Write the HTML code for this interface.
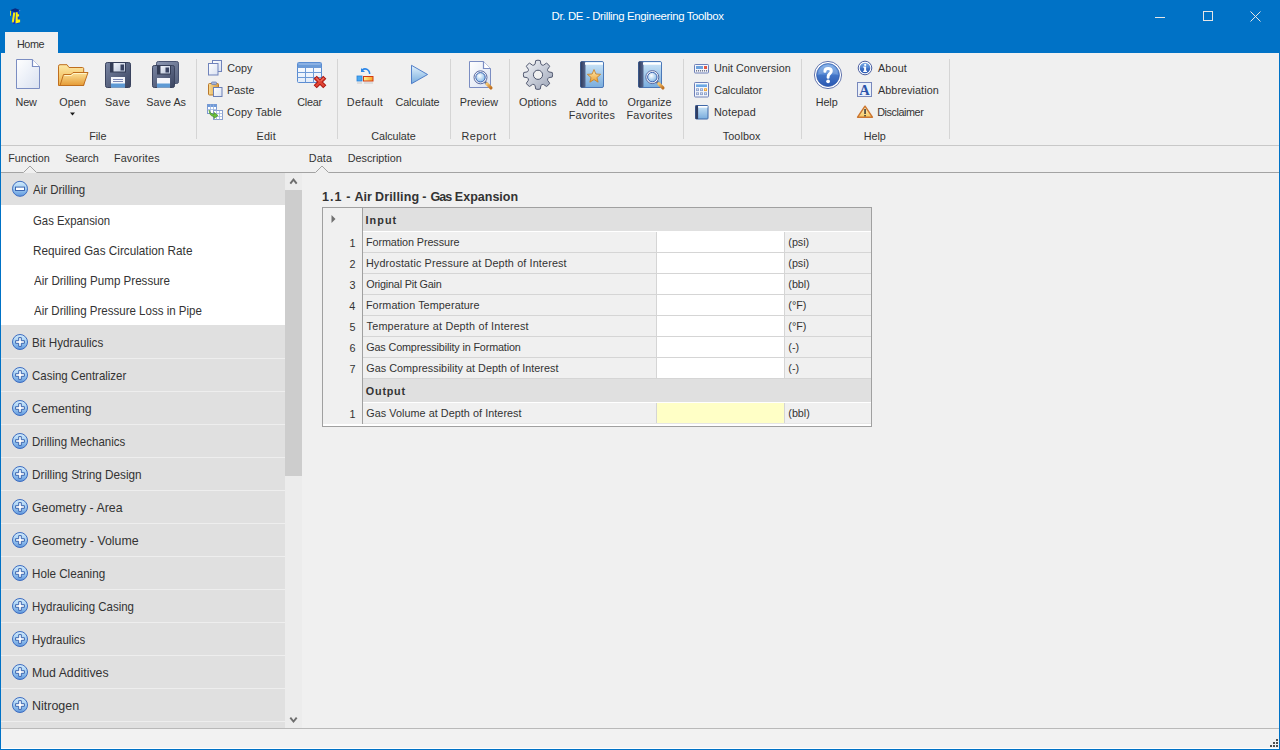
<!DOCTYPE html><html><head><meta charset="utf-8"><style>
html,body{margin:0;padding:0;width:1280px;height:750px;overflow:hidden;background:#f0f0f0}
.t{position:absolute;white-space:nowrap;font-family:"Liberation Sans",sans-serif}
.r{position:absolute}
svg{position:absolute}
</style></head><body>
<div class="r" style="left:0px;top:0px;width:1280px;height:750px;background:#0072c6;"></div>
<div class="t" style="left:551.59px;top:10.85px;font-size:11.4px;line-height:11.4px;color:#ffffff;letter-spacing:-0.341px;">Dr. DE - Drilling Engineering Toolbox</div>
<div class="r" style="left:1px;top:53px;width:1278px;height:92px;background:#f0f0f0;"></div>
<div class="r" style="left:1px;top:145px;width:1278px;height:1px;background:#c8c8c8;"></div>
<div class="r" style="left:5px;top:32px;width:53px;height:21px;background:#f0f0f0;"></div>
<div class="t" style="left:16.94px;top:38.86px;font-size:10.8px;line-height:10.8px;color:#333333;letter-spacing:-0.411px;">Home</div>
<div class="r" style="left:1px;top:146px;width:1278px;height:582px;background:#f0f0f0;"></div>
<div class="r" style="left:1px;top:728px;width:1278px;height:1px;background:#b9b9b9;"></div>
<div class="r" style="left:1px;top:729px;width:1278px;height:19px;background:#f2f2f2;"></div>
<div class="r" style="left:1px;top:748px;width:1278px;height:1px;background:#ffffff;"></div>
<div class="t" style="left:15.39px;top:96.86px;font-size:10.8px;line-height:10.8px;color:#333333;letter-spacing:-0.043px;">New</div>
<div class="t" style="left:59.21px;top:96.86px;font-size:10.8px;line-height:10.8px;color:#333333;letter-spacing:0.112px;">Open</div>
<div class="t" style="left:105.06px;top:96.86px;font-size:10.8px;line-height:10.8px;color:#333333;letter-spacing:0.085px;">Save</div>
<div class="t" style="left:146.36px;top:96.86px;font-size:10.8px;line-height:10.8px;color:#333333;letter-spacing:0.006px;">Save As</div>
<div class="t" style="left:89.14px;top:130.86px;font-size:10.8px;line-height:10.8px;color:#333333;letter-spacing:-0.031px;">File</div>
<div class="r" style="left:196px;top:59px;width:1px;height:80px;background:#d5d5d5;"></div>
<div class="r" style="left:337px;top:59px;width:1px;height:80px;background:#d5d5d5;"></div>
<div class="r" style="left:450px;top:59px;width:1px;height:80px;background:#d5d5d5;"></div>
<div class="r" style="left:509px;top:59px;width:1px;height:80px;background:#d5d5d5;"></div>
<div class="r" style="left:683px;top:59px;width:1px;height:80px;background:#d5d5d5;"></div>
<div class="r" style="left:801px;top:59px;width:1px;height:80px;background:#d5d5d5;"></div>
<div class="r" style="left:949px;top:59px;width:1px;height:80px;background:#d5d5d5;"></div>
<div class="t" style="left:227.21px;top:62.86px;font-size:10.8px;line-height:10.8px;color:#333333;letter-spacing:-0.041px;">Copy</div>
<div class="t" style="left:226.89px;top:84.86px;font-size:10.8px;line-height:10.8px;color:#333333;letter-spacing:0.002px;">Paste</div>
<div class="t" style="left:226.96px;top:106.86px;font-size:10.8px;line-height:10.8px;color:#333333;letter-spacing:0.104px;">Copy Table</div>
<div class="t" style="left:297.21px;top:96.86px;font-size:10.8px;line-height:10.8px;color:#333333;letter-spacing:-0.227px;">Clear</div>
<div class="t" style="left:256.54px;top:130.86px;font-size:10.8px;line-height:10.8px;color:#333333;letter-spacing:0.163px;">Edit</div>
<div class="t" style="left:346.84px;top:96.86px;font-size:10.8px;line-height:10.8px;color:#333333;letter-spacing:0.306px;">Default</div>
<div class="t" style="left:395.46px;top:96.86px;font-size:10.8px;line-height:10.8px;color:#333333;letter-spacing:-0.107px;">Calculate</div>
<div class="t" style="left:371.26px;top:130.86px;font-size:10.8px;line-height:10.8px;color:#333333;letter-spacing:-0.070px;">Calculate</div>
<div class="t" style="left:459.74px;top:96.86px;font-size:10.8px;line-height:10.8px;color:#333333;letter-spacing:-0.014px;">Preview</div>
<div class="t" style="left:461.44px;top:130.86px;font-size:10.8px;line-height:10.8px;color:#333333;letter-spacing:0.454px;">Report</div>
<div class="t" style="left:518.96px;top:96.86px;font-size:10.8px;line-height:10.8px;color:#333333;letter-spacing:0.069px;">Options</div>
<div class="t" style="left:576.00px;top:96.86px;font-size:10.8px;line-height:10.8px;color:#333333;letter-spacing:0.124px;">Add to</div>
<div class="t" style="left:568.64px;top:109.86px;font-size:10.8px;line-height:10.8px;color:#333333;letter-spacing:0.225px;">Favorites</div>
<div class="t" style="left:627.46px;top:96.86px;font-size:10.8px;line-height:10.8px;color:#333333;letter-spacing:0.033px;">Organize</div>
<div class="t" style="left:626.54px;top:109.86px;font-size:10.8px;line-height:10.8px;color:#333333;letter-spacing:0.175px;">Favorites</div>
<div class="t" style="left:713.89px;top:62.86px;font-size:10.8px;line-height:10.8px;color:#333333;letter-spacing:-0.002px;">Unit Conversion</div>
<div class="t" style="left:714.21px;top:84.86px;font-size:10.8px;line-height:10.8px;color:#333333;letter-spacing:-0.089px;">Calculator</div>
<div class="t" style="left:713.89px;top:106.86px;font-size:10.8px;line-height:10.8px;color:#333333;letter-spacing:0.156px;">Notepad</div>
<div class="t" style="left:722.78px;top:130.86px;font-size:10.8px;line-height:10.8px;color:#333333;letter-spacing:0.079px;">Toolbox</div>
<div class="t" style="left:815.64px;top:96.86px;font-size:10.8px;line-height:10.8px;color:#333333;letter-spacing:-0.031px;">Help</div>
<div class="t" style="left:878.00px;top:62.86px;font-size:10.8px;line-height:10.8px;color:#333333;letter-spacing:0.153px;">About</div>
<div class="t" style="left:878.00px;top:84.86px;font-size:10.8px;line-height:10.8px;color:#333333;letter-spacing:0.064px;">Abbreviation</div>
<div class="t" style="left:877.14px;top:106.86px;font-size:10.8px;line-height:10.8px;color:#333333;letter-spacing:-0.417px;">Disclaimer</div>
<div class="t" style="left:863.64px;top:130.86px;font-size:10.8px;line-height:10.8px;color:#333333;letter-spacing:-0.015px;">Help</div>
<div class="t" style="left:8.14px;top:152.86px;font-size:10.8px;line-height:10.8px;color:#333333;letter-spacing:0.021px;">Function</div>
<div class="t" style="left:65.26px;top:152.86px;font-size:10.8px;line-height:10.8px;color:#333333;letter-spacing:-0.128px;">Search</div>
<div class="t" style="left:113.94px;top:152.86px;font-size:10.8px;line-height:10.8px;color:#333333;letter-spacing:0.150px;">Favorites</div>
<div class="t" style="left:308.74px;top:152.86px;font-size:10.8px;line-height:10.8px;color:#333333;letter-spacing:0.159px;">Data</div>
<div class="t" style="left:347.84px;top:152.86px;font-size:10.8px;line-height:10.8px;color:#333333;letter-spacing:-0.019px;">Description</div>
<svg style="left:0;top:160px" width="1280" height="16"><path d="M1 12.5 H23.5 L30 6 L36.5 12.5 H315.5 L322 6 L328.5 12.5 H1279" fill="none" stroke="#a3a3a3" stroke-width="1"/></svg>
<div class="r" style="left:1px;top:173px;width:284px;height:555px;background:#e0e0e0;"></div>
<div class="r" style="left:1px;top:205px;width:284px;height:120px;background:#ffffff;"></div>
<div class="t" style="left:32.50px;top:183.50px;font-size:12.4px;line-height:12.4px;color:#333333;transform:scaleX(0.9250);transform-origin:0 0;">Air Drilling</div>
<div class="t" style="left:32.93px;top:214.50px;font-size:12.4px;line-height:12.4px;color:#333333;transform:scaleX(0.9165);transform-origin:0 0;">Gas Expansion</div>
<div class="t" style="left:32.56px;top:244.50px;font-size:12.4px;line-height:12.4px;color:#333333;transform:scaleX(0.9487);transform-origin:0 0;">Required Gas Circulation Rate</div>
<div class="t" style="left:33.50px;top:274.50px;font-size:12.4px;line-height:12.4px;color:#333333;transform:scaleX(0.9356);transform-origin:0 0;">Air Drilling Pump Pressure</div>
<div class="t" style="left:33.50px;top:304.50px;font-size:12.4px;line-height:12.4px;color:#333333;transform:scaleX(0.9309);transform-origin:0 0;">Air Drilling Pressure Loss in Pipe</div>
<div class="r" style="left:1px;top:358px;width:284px;height:1px;background:#eeeeee;"></div>
<div class="t" style="left:32.37px;top:337.00px;font-size:12.4px;line-height:12.4px;color:#333333;transform:scaleX(0.9405);transform-origin:0 0;">Bit Hydraulics</div>
<div class="r" style="left:1px;top:391px;width:284px;height:1px;background:#eeeeee;"></div>
<div class="t" style="left:31.83px;top:370.00px;font-size:12.4px;line-height:12.4px;color:#333333;transform:scaleX(0.9250);transform-origin:0 0;">Casing Centralizer</div>
<div class="r" style="left:1px;top:424px;width:284px;height:1px;background:#eeeeee;"></div>
<div class="t" style="left:31.78px;top:403.00px;font-size:12.4px;line-height:12.4px;color:#333333;transform:scaleX(0.9944);transform-origin:0 0;">Cementing</div>
<div class="r" style="left:1px;top:457px;width:284px;height:1px;background:#eeeeee;"></div>
<div class="t" style="left:32.38px;top:436.00px;font-size:12.4px;line-height:12.4px;color:#333333;transform:scaleX(0.9271);transform-origin:0 0;">Drilling Mechanics</div>
<div class="r" style="left:1px;top:490px;width:284px;height:1px;background:#eeeeee;"></div>
<div class="t" style="left:32.36px;top:469.00px;font-size:12.4px;line-height:12.4px;color:#333333;transform:scaleX(0.9475);transform-origin:0 0;">Drilling String Design</div>
<div class="r" style="left:1px;top:523px;width:284px;height:1px;background:#eeeeee;"></div>
<div class="t" style="left:31.78px;top:502.00px;font-size:12.4px;line-height:12.4px;color:#333333;transform:scaleX(0.9956);transform-origin:0 0;">Geometry - Area</div>
<div class="r" style="left:1px;top:556px;width:284px;height:1px;background:#eeeeee;"></div>
<div class="t" style="left:31.78px;top:535.00px;font-size:12.4px;line-height:12.4px;color:#333333;transform:scaleX(0.9995);transform-origin:0 0;">Geometry - Volume</div>
<div class="r" style="left:1px;top:589px;width:284px;height:1px;background:#eeeeee;"></div>
<div class="t" style="left:32.37px;top:568.00px;font-size:12.4px;line-height:12.4px;color:#333333;transform:scaleX(0.9400);transform-origin:0 0;">Hole Cleaning</div>
<div class="r" style="left:1px;top:622px;width:284px;height:1px;background:#eeeeee;"></div>
<div class="t" style="left:32.38px;top:601.00px;font-size:12.4px;line-height:12.4px;color:#333333;transform:scaleX(0.9251);transform-origin:0 0;">Hydraulicing Casing</div>
<div class="r" style="left:1px;top:655px;width:284px;height:1px;background:#eeeeee;"></div>
<div class="t" style="left:32.39px;top:634.00px;font-size:12.4px;line-height:12.4px;color:#333333;transform:scaleX(0.9211);transform-origin:0 0;">Hydraulics</div>
<div class="r" style="left:1px;top:688px;width:284px;height:1px;background:#eeeeee;"></div>
<div class="t" style="left:32.32px;top:667.00px;font-size:12.4px;line-height:12.4px;color:#333333;transform:scaleX(0.9922);transform-origin:0 0;">Mud Additives</div>
<div class="r" style="left:1px;top:721px;width:284px;height:1px;background:#eeeeee;"></div>
<div class="t" style="left:32.30px;top:700.00px;font-size:12.4px;line-height:12.4px;color:#333333;transform:scaleX(1.0057);transform-origin:0 0;">Nitrogen</div>
<div class="r" style="left:1px;top:722px;width:284px;height:6px;background:#e0e0e0;"></div>
<div class="r" style="left:285px;top:173px;width:17px;height:555px;background:#ececec;"></div>
<div class="r" style="left:285px;top:190px;width:17px;height:286px;background:#cdcdcd;"></div>
<div class="t" style="left:321.95px;top:191.42px;font-size:12.5px;line-height:12.5px;color:#333333;font-weight:bold;letter-spacing:1.025px;">1.1</div>
<div class="t" style="left:346.20px;top:191.42px;font-size:12.5px;line-height:12.5px;color:#333333;font-weight:bold;">-</div>
<div class="t" style="left:354.62px;top:191.42px;font-size:12.5px;line-height:12.5px;color:#333333;font-weight:bold;letter-spacing:-0.025px;">Air</div>
<div class="t" style="left:375.12px;top:191.42px;font-size:12.5px;line-height:12.5px;color:#333333;font-weight:bold;letter-spacing:0.132px;">Drilling</div>
<div class="t" style="left:422.20px;top:191.42px;font-size:12.5px;line-height:12.5px;color:#333333;font-weight:bold;">-</div>
<div class="t" style="left:430.50px;top:191.42px;font-size:12.5px;line-height:12.5px;color:#333333;font-weight:bold;letter-spacing:-0.963px;">Gas</div>
<div class="t" style="left:454.82px;top:191.42px;font-size:12.5px;line-height:12.5px;color:#333333;font-weight:bold;letter-spacing:0.012px;">Expansion</div>
<div class="r" style="left:322px;top:207px;width:550px;height:220px;background:#a0a0a0;"></div>
<div class="r" style="left:323px;top:208px;width:548px;height:218px;background:#ffffff;"></div>
<div class="r" style="left:323px;top:208px;width:39px;height:216px;background:#f0f0f0;"></div>
<div class="r" style="left:362px;top:208px;width:1px;height:216px;background:#a0a0a0;"></div>
<div class="r" style="left:363px;top:208px;width:508px;height:23px;background:#e0e0e0;"></div>
<div class="r" style="left:363px;top:231px;width:508px;height:1px;background:#ffffff;"></div>
<div class="t" style="left:365.54px;top:214.86px;font-size:10.8px;line-height:10.8px;color:#333333;font-weight:bold;letter-spacing:1.053px;">Input</div>
<div class="r" style="left:363px;top:232px;width:293px;height:20px;background:#f0f0f0;"></div>
<div class="r" style="left:656px;top:232px;width:1px;height:20px;background:#d5d5d5;"></div>
<div class="r" style="left:657px;top:232px;width:127px;height:20px;background:#ffffff;"></div>
<div class="r" style="left:784px;top:232px;width:1px;height:20px;background:#d5d5d5;"></div>
<div class="r" style="left:785px;top:232px;width:86px;height:20px;background:#f0f0f0;"></div>
<div class="r" style="left:363px;top:252px;width:508px;height:1px;background:#d5d5d5;"></div>
<div class="t" style="left:349.49px;top:237.86px;font-size:10.8px;line-height:10.8px;color:#333333;">1</div>
<div class="t" style="left:365.94px;top:236.86px;font-size:10.8px;line-height:10.8px;color:#333333;letter-spacing:-0.078px;">Formation Pressure</div>
<div class="t" style="left:788.35px;top:236.86px;font-size:10.8px;line-height:10.8px;color:#333333;letter-spacing:-0.050px;">(psi)</div>
<div class="r" style="left:363px;top:253px;width:293px;height:20px;background:#f0f0f0;"></div>
<div class="r" style="left:656px;top:253px;width:1px;height:20px;background:#d5d5d5;"></div>
<div class="r" style="left:657px;top:253px;width:127px;height:20px;background:#ffffff;"></div>
<div class="r" style="left:784px;top:253px;width:1px;height:20px;background:#d5d5d5;"></div>
<div class="r" style="left:785px;top:253px;width:86px;height:20px;background:#f0f0f0;"></div>
<div class="r" style="left:363px;top:273px;width:508px;height:1px;background:#d5d5d5;"></div>
<div class="t" style="left:349.49px;top:258.86px;font-size:10.8px;line-height:10.8px;color:#333333;">2</div>
<div class="t" style="left:365.94px;top:257.86px;font-size:10.8px;line-height:10.8px;color:#333333;letter-spacing:0.140px;">Hydrostatic Pressure at Depth of Interest</div>
<div class="t" style="left:788.35px;top:257.86px;font-size:10.8px;line-height:10.8px;color:#333333;letter-spacing:-0.050px;">(psi)</div>
<div class="r" style="left:363px;top:274px;width:293px;height:20px;background:#f0f0f0;"></div>
<div class="r" style="left:656px;top:274px;width:1px;height:20px;background:#d5d5d5;"></div>
<div class="r" style="left:657px;top:274px;width:127px;height:20px;background:#ffffff;"></div>
<div class="r" style="left:784px;top:274px;width:1px;height:20px;background:#d5d5d5;"></div>
<div class="r" style="left:785px;top:274px;width:86px;height:20px;background:#f0f0f0;"></div>
<div class="r" style="left:363px;top:294px;width:508px;height:1px;background:#d5d5d5;"></div>
<div class="t" style="left:349.49px;top:279.86px;font-size:10.8px;line-height:10.8px;color:#333333;">3</div>
<div class="t" style="left:366.26px;top:278.86px;font-size:10.8px;line-height:10.8px;color:#333333;letter-spacing:-0.196px;">Original Pit Gain</div>
<div class="t" style="left:788.35px;top:278.86px;font-size:10.8px;line-height:10.8px;color:#333333;letter-spacing:-0.050px;">(bbl)</div>
<div class="r" style="left:363px;top:295px;width:293px;height:20px;background:#f0f0f0;"></div>
<div class="r" style="left:656px;top:295px;width:1px;height:20px;background:#d5d5d5;"></div>
<div class="r" style="left:657px;top:295px;width:127px;height:20px;background:#ffffff;"></div>
<div class="r" style="left:784px;top:295px;width:1px;height:20px;background:#d5d5d5;"></div>
<div class="r" style="left:785px;top:295px;width:86px;height:20px;background:#f0f0f0;"></div>
<div class="r" style="left:363px;top:315px;width:508px;height:1px;background:#d5d5d5;"></div>
<div class="t" style="left:349.28px;top:300.86px;font-size:10.8px;line-height:10.8px;color:#333333;">4</div>
<div class="t" style="left:365.94px;top:299.86px;font-size:10.8px;line-height:10.8px;color:#333333;letter-spacing:0.080px;">Formation Temperature</div>
<div class="t" style="left:788.35px;top:299.86px;font-size:10.8px;line-height:10.8px;color:#333333;letter-spacing:-0.050px;">(°F)</div>
<div class="r" style="left:363px;top:316px;width:293px;height:20px;background:#f0f0f0;"></div>
<div class="r" style="left:656px;top:316px;width:1px;height:20px;background:#d5d5d5;"></div>
<div class="r" style="left:657px;top:316px;width:127px;height:20px;background:#ffffff;"></div>
<div class="r" style="left:784px;top:316px;width:1px;height:20px;background:#d5d5d5;"></div>
<div class="r" style="left:785px;top:316px;width:86px;height:20px;background:#f0f0f0;"></div>
<div class="r" style="left:363px;top:336px;width:508px;height:1px;background:#d5d5d5;"></div>
<div class="t" style="left:349.49px;top:321.86px;font-size:10.8px;line-height:10.8px;color:#333333;">5</div>
<div class="t" style="left:366.58px;top:320.86px;font-size:10.8px;line-height:10.8px;color:#333333;letter-spacing:0.213px;">Temperature at Depth of Interest</div>
<div class="t" style="left:788.35px;top:320.86px;font-size:10.8px;line-height:10.8px;color:#333333;letter-spacing:-0.050px;">(°F)</div>
<div class="r" style="left:363px;top:337px;width:293px;height:20px;background:#f0f0f0;"></div>
<div class="r" style="left:656px;top:337px;width:1px;height:20px;background:#d5d5d5;"></div>
<div class="r" style="left:657px;top:337px;width:127px;height:20px;background:#ffffff;"></div>
<div class="r" style="left:784px;top:337px;width:1px;height:20px;background:#d5d5d5;"></div>
<div class="r" style="left:785px;top:337px;width:86px;height:20px;background:#f0f0f0;"></div>
<div class="r" style="left:363px;top:357px;width:508px;height:1px;background:#d5d5d5;"></div>
<div class="t" style="left:349.49px;top:342.86px;font-size:10.8px;line-height:10.8px;color:#333333;">6</div>
<div class="t" style="left:366.26px;top:341.86px;font-size:10.8px;line-height:10.8px;color:#333333;letter-spacing:-0.142px;">Gas Compressibility in Formation</div>
<div class="t" style="left:788.35px;top:341.86px;font-size:10.8px;line-height:10.8px;color:#333333;letter-spacing:-0.050px;">(-)</div>
<div class="r" style="left:363px;top:358px;width:293px;height:20px;background:#f0f0f0;"></div>
<div class="r" style="left:656px;top:358px;width:1px;height:20px;background:#d5d5d5;"></div>
<div class="r" style="left:657px;top:358px;width:127px;height:20px;background:#ffffff;"></div>
<div class="r" style="left:784px;top:358px;width:1px;height:20px;background:#d5d5d5;"></div>
<div class="r" style="left:785px;top:358px;width:86px;height:20px;background:#f0f0f0;"></div>
<div class="r" style="left:363px;top:378px;width:508px;height:1px;background:#d5d5d5;"></div>
<div class="t" style="left:349.49px;top:363.86px;font-size:10.8px;line-height:10.8px;color:#333333;">7</div>
<div class="t" style="left:366.26px;top:362.86px;font-size:10.8px;line-height:10.8px;color:#333333;letter-spacing:0.036px;">Gas Compressibility at Depth of Interest</div>
<div class="t" style="left:788.35px;top:362.86px;font-size:10.8px;line-height:10.8px;color:#333333;letter-spacing:-0.050px;">(-)</div>
<div class="r" style="left:363px;top:379px;width:508px;height:23px;background:#e0e0e0;"></div>
<div class="r" style="left:363px;top:402px;width:508px;height:1px;background:#ffffff;"></div>
<div class="t" style="left:365.87px;top:385.86px;font-size:10.8px;line-height:10.8px;color:#333333;font-weight:bold;letter-spacing:0.765px;">Output</div>
<div class="r" style="left:363px;top:403px;width:293px;height:20px;background:#f0f0f0;"></div>
<div class="r" style="left:656px;top:403px;width:1px;height:20px;background:#d5d5d5;"></div>
<div class="r" style="left:657px;top:403px;width:127px;height:20px;background:#ffffc6;"></div>
<div class="r" style="left:784px;top:403px;width:1px;height:20px;background:#d5d5d5;"></div>
<div class="r" style="left:785px;top:403px;width:86px;height:20px;background:#f0f0f0;"></div>
<div class="r" style="left:363px;top:423px;width:508px;height:1px;background:#d5d5d5;"></div>
<div class="t" style="left:349.49px;top:408.86px;font-size:10.8px;line-height:10.8px;color:#333333;">1</div>
<div class="t" style="left:366.26px;top:407.86px;font-size:10.8px;line-height:10.8px;color:#333333;letter-spacing:0.055px;">Gas Volume at Depth of Interest</div>
<div class="t" style="left:788.35px;top:407.86px;font-size:10.8px;line-height:10.8px;color:#333333;letter-spacing:-0.050px;">(bbl)</div>
<div class="r" style="left:363px;top:423px;width:508px;height:1px;background:#e6e6e6;"></div>
<svg style="left:0;top:0" width="1280" height="750" viewBox="0 0 1280 750"><defs>
<linearGradient id="gPage" x1="0" y1="0" x2="1" y2="1"><stop offset="0" stop-color="#ffffff"/><stop offset="1" stop-color="#d9e1f1"/></linearGradient>
<linearGradient id="gFoldBack" x1="0" y1="0" x2="0" y2="1"><stop offset="0" stop-color="#fde9a6"/><stop offset="1" stop-color="#eeb048"/></linearGradient>
<linearGradient id="gFoldFront" x1="0" y1="0" x2="0" y2="1"><stop offset="0" stop-color="#fce39a"/><stop offset="1" stop-color="#e59a34"/></linearGradient>
<linearGradient id="gDisk" x1="0" y1="0" x2="1" y2="1"><stop offset="0" stop-color="#7a86a3"/><stop offset="1" stop-color="#3a4460"/></linearGradient>
<linearGradient id="gDisk2" x1="0" y1="0" x2="1" y2="1"><stop offset="0" stop-color="#8d98b3"/><stop offset="1" stop-color="#55607c"/></linearGradient>
<linearGradient id="gShut" x1="0" y1="0" x2="1" y2="1"><stop offset="0" stop-color="#f2f5fb"/><stop offset="1" stop-color="#b8c3d8"/></linearGradient>
<linearGradient id="gTri" x1="0" y1="0" x2="0" y2="1"><stop offset="0" stop-color="#e2f2fc"/><stop offset="1" stop-color="#76acde"/></linearGradient>
<linearGradient id="gGear" x1="0" y1="0" x2="1" y2="1"><stop offset="0" stop-color="#f6f7fa"/><stop offset="1" stop-color="#9aa3b6"/></linearGradient>
<linearGradient id="gBook" x1="0" y1="0" x2="0" y2="1"><stop offset="0" stop-color="#cfe7f8"/><stop offset="1" stop-color="#78acdd"/></linearGradient>
<linearGradient id="gSpine" x1="0" y1="0" x2="1" y2="0"><stop offset="0" stop-color="#2e3a5c"/><stop offset="1" stop-color="#56678e"/></linearGradient>
<linearGradient id="gStar" x1="0" y1="0" x2="0" y2="1"><stop offset="0" stop-color="#fff0b8"/><stop offset="1" stop-color="#eb9c2c"/></linearGradient>
<radialGradient id="gLens" cx="0.4" cy="0.35" r="0.7"><stop offset="0" stop-color="#ffffff"/><stop offset="1" stop-color="#7fb6e6"/></radialGradient>
<linearGradient id="gHandle" x1="0" y1="0" x2="1" y2="1"><stop offset="0" stop-color="#f8c870"/><stop offset="1" stop-color="#c07020"/></linearGradient>
<linearGradient id="gHelp" x1="0" y1="0" x2="0" y2="1"><stop offset="0" stop-color="#7aaae6"/><stop offset="0.5" stop-color="#4f82d0"/><stop offset="0.52" stop-color="#4274c6"/><stop offset="1" stop-color="#2a58b2"/></linearGradient>
<linearGradient id="gCirc" x1="0" y1="0" x2="0" y2="1"><stop offset="0" stop-color="#d2ebfb"/><stop offset="0.5" stop-color="#a2cdf2"/><stop offset="1" stop-color="#5e96dc"/></linearGradient>
<linearGradient id="gWarn" x1="0" y1="0" x2="0" y2="1"><stop offset="0" stop-color="#fff3c8"/><stop offset="1" stop-color="#f5c860"/></linearGradient>
<linearGradient id="gClip" x1="0" y1="0" x2="1" y2="0"><stop offset="0" stop-color="#f9dc94"/><stop offset="1" stop-color="#d99a40"/></linearGradient>
<linearGradient id="gDef" x1="0" y1="0" x2="1" y2="0"><stop offset="0" stop-color="#fff6a0"/><stop offset="1" stop-color="#f7a020"/></linearGradient>
<linearGradient id="gCell" x1="0" y1="0" x2="0" y2="1"><stop offset="0" stop-color="#ffffff"/><stop offset="1" stop-color="#e2ecf9"/></linearGradient>
</defs><path d="M11.5 11.5 L19 11 L19.5 23.5 L13 24 Z" fill="#0a30d8" opacity="0.9"/><path d="M10 10.3 L15.2 8.3 L20.5 10.2 L15.3 12.3 Z" fill="#0b2a80"/><path d="M18.5 10.6 L20.3 10.2 L20 11.2 Z" fill="#7fc0f0"/><path d="M10 10.8 h1 v5 h-1 Z" fill="#d8e020"/><path d="M13.2 12.6 h2.1 l-1.4 9.6 h-2.1 Z" fill="#f6f010"/><path d="M15.8 12.3 h1.9 v2 l1.4 -0.1 v2.2 h-1.4 v3.2 h2.4 v2.6 l-4.6 1.2 Z" fill="#fbf40c"/><path d="M12.3 21.6 h1.2 l-0.2 0.8 h-1.1 Z" fill="#e0a020"/><path d="M16.5 59.5 H32.5 L39.5 66.5 V88.5 H16.5 Z" fill="url(#gPage)" stroke="#7b8dc2" stroke-width="1"/><path d="M32.5 59.5 V66.5 H39.5" fill="#ffffff" stroke="#7b8dc2" stroke-width="1.2"/><path d="M58.5 85.5 V66.2 q0-1.5 1.5-1.5 H67 L69 67.5 H82.5 q1.2 0 1.2 1.2 V85.5 Z" fill="url(#gFoldBack)" stroke="#bf6e1e" stroke-width="1"/><path d="M60 85.5 L63.5 74.5 H71 L73 72.5 H88 L83.5 85.5 Z" fill="url(#gFoldFront)" stroke="#bf6e1e" stroke-width="1" stroke-linejoin="round"/><path d="M64.5 75.5 H71.5 L73.5 73.5 H86.5" fill="none" stroke="#fff4c8" stroke-width="1"/><rect x="105.5" y="62.5" width="25" height="25" rx="1.8" fill="url(#gDisk)" stroke="#3a435e" stroke-width="1"/><rect x="110" y="62.5" width="16" height="10" fill="#333c55"/><rect x="113.5" y="63" width="11.5" height="8.5" fill="url(#gShut)"/><rect x="120.5" y="64.5" width="3.5" height="6" fill="#384260"/><rect x="111" y="77" width="14" height="10.5" fill="#f4f6fb"/><rect x="111" y="83.5" width="14" height="4" fill="#5d9ad5"/><rect x="113" y="79" width="10" height="1" fill="#7c88b4"/><rect x="113" y="81" width="10" height="1" fill="#7c88b4"/><rect x="156.5" y="61.5" width="22" height="22" rx="1.8" fill="url(#gDisk2)" stroke="#4a5472" stroke-width="1"/><rect x="152.5" y="65.5" width="22" height="22" rx="1.8" fill="url(#gDisk)" stroke="#3a435e" stroke-width="1"/><rect x="157" y="65.5" width="14" height="9" fill="#333c55"/><rect x="160.5" y="66" width="9.5" height="7.5" fill="url(#gShut)"/><rect x="165.5" y="67.5" width="3.5" height="5" fill="#384260"/><rect x="157" y="78" width="13" height="9.5" fill="#f4f6fb"/><rect x="157" y="83.5" width="13" height="4" fill="#5d9ad5"/><rect x="212.5" y="60.5" width="9" height="11" fill="url(#gPage)" stroke="#7083bb"/><rect x="208.5" y="63.5" width="9.5" height="11.5" fill="url(#gPage)" stroke="#7083bb"/><rect x="208.5" y="83.5" width="10" height="11.5" rx="1" fill="url(#gClip)" stroke="#b9782c"/><rect x="211.5" y="82" width="5" height="2.5" rx="0.8" fill="#a8b6d8" stroke="#6b7fb5" stroke-width="0.8"/><rect x="213.5" y="87.5" width="8.5" height="9" fill="url(#gPage)" stroke="#6b7fb5"/><rect x="207.5" y="104.5" width="9" height="9" fill="#ffffff" stroke="#7d9ad0"/><rect x="207.5" y="104.5" width="9" height="2.5" fill="#6f9ad8"/><path d="M210.5 104.5 V113.5 M213.5 104.5 V113.5 M207.5 109.5 H216.5" stroke="#9ab4e0" stroke-width="0.8"/><rect x="213.5" y="110.5" width="9" height="9" fill="#ffffff" stroke="#8aa0d0"/><path d="M216.5 110.5 V119.5 M219.5 110.5 V119.5 M213.5 113.5 H222.5 M213.5 116.5 H222.5" stroke="#a0b4de" stroke-width="0.8"/><path d="M209 110 q1 4 5 4.5 v-2 l4 3 l-4 3 v-2 q-4.5 0-5-6.5 Z" fill="#6cc03c" stroke="#3d8a1c" stroke-width="0.6"/><rect x="297.5" y="62.5" width="24" height="20" rx="1" fill="url(#gCell)" stroke="#5a8cd2"/><rect x="298" y="63" width="23" height="4.5" fill="#6b9bd8"/><rect x="298.5" y="63.5" width="22" height="1" fill="#a9c6ee"/><path d="M297.5 67.5 H321.5 M297.5 72.5 H321.5 M297.5 77.5 H321.5 M305.5 67.5 V82.5 M313.5 67.5 V82.5" stroke="#6e9ad6" stroke-width="1"/><path d="M315.2 77.2 L324.8 86.8 M324.8 77.2 L315.2 86.8" stroke="#a8140f" stroke-width="4.4" stroke-linecap="butt"/><path d="M315.8 77.8 L324.2 86.2 M324.2 77.8 L315.8 86.2" stroke="#e04434" stroke-width="2.6" stroke-linecap="butt"/><path d="M316.3 78.0 L319.5 81.2 M323.7 78.0 L320.5 81.2" stroke="#f08a7a" stroke-width="0.9"/><rect x="357" y="76" width="5" height="5" fill="#4aa8f0" stroke="#2a80d8" stroke-width="0.8"/><rect x="363.5" y="76.5" width="9.5" height="4.5" fill="url(#gDef)" stroke="#d23a12" stroke-width="1"/><path d="M362 70 q3.5 -2.5 6.5 0.5 q1.2 1.5 1.2 3.5" fill="none" stroke="#2a86e8" stroke-width="1.5"/><path d="M361 68 V72 H365 Z" fill="#2a86e8"/><rect x="357" y="82.5" width="5" height="1" fill="#c8c8c8"/><rect x="364" y="82.5" width="9" height="1" fill="#c8c8c8"/><path d="M411.5 65.3 L427.6 74.5 L411.5 83.7 Z" fill="url(#gTri)" stroke="#4474c4" stroke-width="0.9" stroke-linejoin="miter"/><path d="M469.5 61.5 H483.5 L490.5 68.5 V87.5 H469.5 Z" fill="url(#gPage)" stroke="#7b8dc2"/><path d="M483.5 61.5 V68.5 H490.5" fill="#ffffff" stroke="#7b8dc2" stroke-width="1.2"/><path d="M484.42 81.30 L486.95 83.86" stroke="#56648e" stroke-width="2.6" stroke-linecap="butt"/><path d="M486.95 83.86 L490.94 87.93" stroke="url(#gHandle)" stroke-width="3.2" stroke-linecap="round"/><circle cx="480.5" cy="77.3" r="6.5" fill="#f4f6fb" stroke="#5a6aa0" stroke-width="1"/><circle cx="480.5" cy="77.3" r="4.7" fill="url(#gLens)" stroke="#3a62b0" stroke-width="1"/><path d="M535.07 64.20 L535.71 60.58 Q538.00 59.80 540.29 60.58 L540.93 64.20 Q541.87 65.47 543.42 65.23 L543.42 65.23 L546.43 63.13 Q548.61 64.19 549.67 66.37 L547.57 69.38 Q547.33 70.93 548.60 71.87 L548.60 71.87 L552.22 72.51 Q553.00 74.80 552.22 77.09 L548.60 77.73 Q547.33 78.67 547.57 80.22 L547.57 80.22 L549.67 83.23 Q548.61 85.41 546.43 86.47 L543.42 84.37 Q541.87 84.13 540.93 85.40 L540.93 85.40 L540.29 89.02 Q538.00 89.80 535.71 89.02 L535.07 85.40 Q534.13 84.13 532.58 84.37 L532.58 84.37 L529.57 86.47 Q527.39 85.41 526.33 83.23 L528.43 80.22 Q528.67 78.67 527.40 77.73 L527.40 77.73 L523.78 77.09 Q523.00 74.80 523.78 72.51 L527.40 71.87 Q528.67 70.93 528.43 69.38 L528.43 69.38 L526.33 66.37 Q527.39 64.19 529.57 63.13 L532.58 65.23 Q534.13 65.47 535.07 64.20 Z" fill="url(#gGear)" stroke="#545b72" stroke-width="1" stroke-linejoin="round"/><circle cx="538" cy="74.8" r="4.6" fill="#f0f0f0" stroke="#4d556c" stroke-width="1"/><rect x="580.5" y="61.5" width="23" height="26" rx="1.5" fill="url(#gBook)" stroke="#4b78b8"/><rect x="580.5" y="61.5" width="5" height="26" rx="1" fill="url(#gSpine)"/><rect x="585" y="62.5" width="18" height="2.2" fill="#ffffff"/><path d="M594.00 69.50 L595.82 73.99 L600.66 74.34 L596.95 77.46 L598.11 82.16 L594.00 79.60 L589.89 82.16 L591.05 77.46 L587.34 74.34 L592.18 73.99 Z" fill="url(#gStar)" stroke="#c58530" stroke-width="0.9" stroke-linejoin="round"/><rect x="638.5" y="61.5" width="23" height="26" rx="1.5" fill="url(#gBook)" stroke="#4b78b8"/><rect x="638.5" y="61.5" width="5" height="26" rx="1" fill="url(#gSpine)"/><rect x="643" y="62.5" width="18" height="2.2" fill="#ffffff"/><path d="M656.22 81.09 L658.75 83.66" stroke="#56648e" stroke-width="2.6" stroke-linecap="butt"/><path d="M658.75 83.66 L662.94 87.93" stroke="url(#gHandle)" stroke-width="3.2" stroke-linecap="round"/><circle cx="652.3" cy="77.1" r="6.5" fill="#f4f6fb" stroke="#5a6aa0" stroke-width="1"/><circle cx="652.3" cy="77.1" r="4.7" fill="url(#gLens)" stroke="#3a62b0" stroke-width="1"/><rect x="694.5" y="64.5" width="14" height="8.5" rx="0.8" fill="#f6f8fc" stroke="#6e80b8"/><rect x="696" y="66" width="7" height="3" fill="#6ea2dc"/><rect x="704" y="66" width="3" height="3" fill="#e05846"/><rect x="696" y="70.3" width="1.1" height="1.1" fill="#3a4060"/><rect x="698" y="70.3" width="1.1" height="1.1" fill="#3a4060"/><rect x="700" y="70.3" width="1.1" height="1.1" fill="#3a4060"/><rect x="702" y="70.3" width="1.1" height="1.1" fill="#3a4060"/><rect x="704" y="70.3" width="1.1" height="1.1" fill="#3a4060"/><rect x="706" y="70.3" width="1.1" height="1.1" fill="#3a4060"/><rect x="694.5" y="82.5" width="14" height="14.5" rx="0.8" fill="#f4f7fc" stroke="#6e80b8"/><rect x="696" y="84.3" width="11" height="2.6" fill="#5f9ee0"/><rect x="696" y="84.3" width="11" height="0.9" fill="#a8d0f6"/><rect x="696" y="88.3" width="3" height="2.8" fill="#8fa2cc"/><rect x="696.9" y="89.2" width="1.2" height="1" fill="#ffffff" opacity="0.75"/><rect x="700" y="88.3" width="3" height="2.8" fill="#8fa2cc"/><rect x="700.9" y="89.2" width="1.2" height="1" fill="#ffffff" opacity="0.75"/><rect x="704" y="88.3" width="3" height="2.8" fill="#f0a030"/><rect x="704.9" y="89.2" width="1.2" height="1" fill="#ffffff" opacity="0.75"/><rect x="696" y="92.3" width="3" height="2.8" fill="#8fa2cc"/><rect x="696.9" y="93.2" width="1.2" height="1" fill="#ffffff" opacity="0.75"/><rect x="700" y="92.3" width="3" height="2.8" fill="#8fa2cc"/><rect x="700.9" y="93.2" width="1.2" height="1" fill="#ffffff" opacity="0.75"/><rect x="704" y="92.3" width="3" height="2.8" fill="#8fa2cc"/><rect x="704.9" y="93.2" width="1.2" height="1" fill="#ffffff" opacity="0.75"/><rect x="695.5" y="105.5" width="12.5" height="13.5" rx="0.8" fill="url(#gBook)" stroke="#3f68a8"/><rect x="695.5" y="105.5" width="2.6" height="13.5" fill="#2f3d62"/><rect x="698.1" y="106" width="9.4" height="1.6" fill="#ffffff"/><circle cx="828" cy="75" r="13.6" fill="#ffffff" stroke="#5468a6" stroke-width="0.9"/><circle cx="828" cy="75" r="11.4" fill="url(#gHelp)" stroke="#2f56a8" stroke-width="0.7"/><path d="M818.2 74.5 A9.8 9.8 0 0 1 837.8 74.5 Q828 71.5 818.2 74.5 Z" fill="#ffffff" opacity="0.16"/><path d="M824.9 71.3 C824.9 69.2 826.3 68.4 828.1 68.4 C830.1 68.4 831.3 69.6 831.3 71.1 C831.3 72.8 830 73.5 829.1 74.2 C828.3 74.8 828.1 75.6 828.1 77.3" fill="none" stroke="#ffffff" stroke-width="3" stroke-linecap="round"/><circle cx="828.1" cy="81.3" r="1.9" fill="#ffffff"/><circle cx="865" cy="68" r="6.8" fill="#ffffff" stroke="#4a5ea0" stroke-width="1"/><circle cx="865" cy="68" r="5.3" fill="url(#gHelp)"/><circle cx="865.2" cy="64.9" r="1.1" fill="#ffffff"/><path d="M863.3 66.6 h2.8 v4.2 h0.9 v1.1 h-3.8 v-1.1 h0.9 v-3.1 h-0.8 Z" fill="#ffffff"/><rect x="857.5" y="82.5" width="14" height="14" fill="#eaf0fa" stroke="#7888bc"/><text x="864.6" y="94.6" text-anchor="middle" font-family="Liberation Serif" font-weight="bold" font-size="14.5" fill="#2a54aa">A</text><path d="M865 106.2 L872.4 117.2 H857.6 Z" fill="url(#gWarn)" stroke="#cc7630" stroke-width="1.5" stroke-linejoin="round"/><rect x="864.3" y="109" width="1.5" height="5" fill="#333"/><rect x="864.3" y="115" width="1.5" height="1.4" fill="#333"/><circle cx="20" cy="188.8" r="7.5" fill="url(#gCirc)" stroke="#3d6cc0" stroke-width="1"/><rect x="15.5" y="187.10000000000002" width="9" height="3.4" fill="#ffffff" stroke="#2f5aa8" stroke-width="0.9"/><circle cx="20" cy="342" r="7.5" fill="url(#gCirc)" stroke="#3d6cc0" stroke-width="1"/><path d="M18.7 337.6 h2.6 v3.1 h3.1 v2.6 h-3.1 v3.1 h-2.6 v-3.1 h-3.1 v-2.6 h3.1 Z" fill="#ffffff" stroke="#2f5aa8" stroke-width="0.9" stroke-linejoin="round"/><circle cx="20" cy="375" r="7.5" fill="url(#gCirc)" stroke="#3d6cc0" stroke-width="1"/><path d="M18.7 370.6 h2.6 v3.1 h3.1 v2.6 h-3.1 v3.1 h-2.6 v-3.1 h-3.1 v-2.6 h3.1 Z" fill="#ffffff" stroke="#2f5aa8" stroke-width="0.9" stroke-linejoin="round"/><circle cx="20" cy="408" r="7.5" fill="url(#gCirc)" stroke="#3d6cc0" stroke-width="1"/><path d="M18.7 403.6 h2.6 v3.1 h3.1 v2.6 h-3.1 v3.1 h-2.6 v-3.1 h-3.1 v-2.6 h3.1 Z" fill="#ffffff" stroke="#2f5aa8" stroke-width="0.9" stroke-linejoin="round"/><circle cx="20" cy="441" r="7.5" fill="url(#gCirc)" stroke="#3d6cc0" stroke-width="1"/><path d="M18.7 436.6 h2.6 v3.1 h3.1 v2.6 h-3.1 v3.1 h-2.6 v-3.1 h-3.1 v-2.6 h3.1 Z" fill="#ffffff" stroke="#2f5aa8" stroke-width="0.9" stroke-linejoin="round"/><circle cx="20" cy="474" r="7.5" fill="url(#gCirc)" stroke="#3d6cc0" stroke-width="1"/><path d="M18.7 469.6 h2.6 v3.1 h3.1 v2.6 h-3.1 v3.1 h-2.6 v-3.1 h-3.1 v-2.6 h3.1 Z" fill="#ffffff" stroke="#2f5aa8" stroke-width="0.9" stroke-linejoin="round"/><circle cx="20" cy="507" r="7.5" fill="url(#gCirc)" stroke="#3d6cc0" stroke-width="1"/><path d="M18.7 502.6 h2.6 v3.1 h3.1 v2.6 h-3.1 v3.1 h-2.6 v-3.1 h-3.1 v-2.6 h3.1 Z" fill="#ffffff" stroke="#2f5aa8" stroke-width="0.9" stroke-linejoin="round"/><circle cx="20" cy="540" r="7.5" fill="url(#gCirc)" stroke="#3d6cc0" stroke-width="1"/><path d="M18.7 535.6 h2.6 v3.1 h3.1 v2.6 h-3.1 v3.1 h-2.6 v-3.1 h-3.1 v-2.6 h3.1 Z" fill="#ffffff" stroke="#2f5aa8" stroke-width="0.9" stroke-linejoin="round"/><circle cx="20" cy="573" r="7.5" fill="url(#gCirc)" stroke="#3d6cc0" stroke-width="1"/><path d="M18.7 568.6 h2.6 v3.1 h3.1 v2.6 h-3.1 v3.1 h-2.6 v-3.1 h-3.1 v-2.6 h3.1 Z" fill="#ffffff" stroke="#2f5aa8" stroke-width="0.9" stroke-linejoin="round"/><circle cx="20" cy="606" r="7.5" fill="url(#gCirc)" stroke="#3d6cc0" stroke-width="1"/><path d="M18.7 601.6 h2.6 v3.1 h3.1 v2.6 h-3.1 v3.1 h-2.6 v-3.1 h-3.1 v-2.6 h3.1 Z" fill="#ffffff" stroke="#2f5aa8" stroke-width="0.9" stroke-linejoin="round"/><circle cx="20" cy="639" r="7.5" fill="url(#gCirc)" stroke="#3d6cc0" stroke-width="1"/><path d="M18.7 634.6 h2.6 v3.1 h3.1 v2.6 h-3.1 v3.1 h-2.6 v-3.1 h-3.1 v-2.6 h3.1 Z" fill="#ffffff" stroke="#2f5aa8" stroke-width="0.9" stroke-linejoin="round"/><circle cx="20" cy="672" r="7.5" fill="url(#gCirc)" stroke="#3d6cc0" stroke-width="1"/><path d="M18.7 667.6 h2.6 v3.1 h3.1 v2.6 h-3.1 v3.1 h-2.6 v-3.1 h-3.1 v-2.6 h3.1 Z" fill="#ffffff" stroke="#2f5aa8" stroke-width="0.9" stroke-linejoin="round"/><circle cx="20" cy="705" r="7.5" fill="url(#gCirc)" stroke="#3d6cc0" stroke-width="1"/><path d="M18.7 700.6 h2.6 v3.1 h3.1 v2.6 h-3.1 v3.1 h-2.6 v-3.1 h-3.1 v-2.6 h3.1 Z" fill="#ffffff" stroke="#2f5aa8" stroke-width="0.9" stroke-linejoin="round"/><path d="M331.5 215 L335.5 219 L331.5 223 Z" fill="#707070"/><path d="M290.3 183.6 L293.5 179.6 L296.7 183.6" fill="none" stroke="#6e6e6e" stroke-width="1.9"/><path d="M290.3 717.6 L293.5 721.6 L296.7 717.6" fill="none" stroke="#6e6e6e" stroke-width="1.9"/><path d="M1155 17.5 H1165" stroke="#e6e6e6" stroke-width="1"/><rect x="1203.5" y="11.5" width="9" height="9" fill="none" stroke="#e6e6e6" stroke-width="1"/><path d="M1250.5 11.5 L1260.5 21.5 M1260.5 11.5 L1250.5 21.5" stroke="#e6e6e6" stroke-width="1"/><path d="M70 112.5 H75 L72.5 115.5 Z" fill="#1a1a1a"/><rect x="1276" y="739" width="2" height="2" fill="#505050"/><rect x="1273" y="742" width="2" height="2" fill="#505050"/><rect x="1276" y="742" width="2" height="2" fill="#505050"/><rect x="1270" y="745" width="2" height="2" fill="#505050"/><rect x="1273" y="745" width="2" height="2" fill="#505050"/><rect x="1276" y="745" width="2" height="2" fill="#505050"/></svg>
</body></html>
